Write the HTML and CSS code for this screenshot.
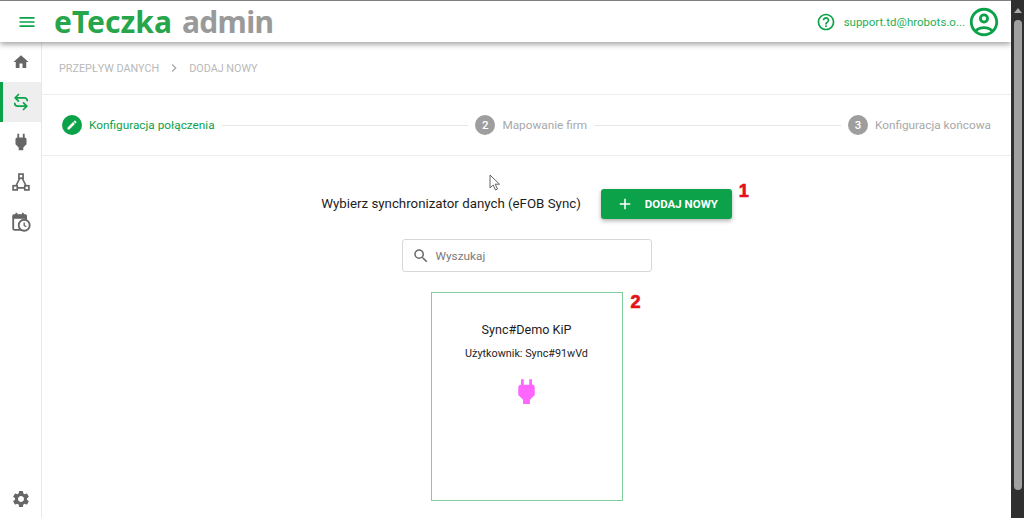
FILE: index.html
```html
<!DOCTYPE html>
<html lang="pl">
<head>
<meta charset="utf-8">
<title>eTeczka admin</title>
<link rel="stylesheet" href="styles.css">
</head>
<body>
<div class="app">
  <header class="topbar">
    <button class="menu-btn" aria-label="menu"><svg class="ic24" viewBox="0 0 24 24"><path d="M3 18h18v-2H3v2zm0-5h18v-2H3v2zm0-7v2h18V6H3z"/></svg></button>
    <div class="logo"><span class="logo-a">eTeczka</span><span class="logo-b">admin</span></div>
    <div class="top-right">
      <svg class="ic-help" viewBox="0 0 24 24"><path d="M11 18h2v-2h-2v2zm1-16C6.48 2 2 6.48 2 12s4.48 10 10 10 10-4.48 10-10S17.52 2 12 2zm0 18c-4.41 0-8-3.59-8-8s3.59-8 8-8 8 3.59 8 8-3.59 8-8 8zm0-14c-2.21 0-4 1.79-4 4h2c0-1.1.9-2 2-2s2 .9 2 2c0 2-3 1.75-3 5h2c0-2.25 3-2.5 3-5 0-2.21-1.79-4-4-4z"/></svg>
      <span class="email">support.td@hrobots.o...</span>
      <svg class="ic-user" viewBox="0 0 24 24"><path d="M12 2C6.48 2 2 6.48 2 12s4.48 10 10 10 10-4.48 10-10S17.52 2 12 2zM7.35 18.5C8.66 17.56 10.26 17 12 17s3.34.56 4.65 1.5C15.34 19.44 13.74 20 12 20s-3.34-.56-4.65-1.5zm10.79-1.38C16.45 15.8 14.32 15 12 15s-4.45.8-6.14 2.12C4.7 15.73 4 13.95 4 12c0-4.42 3.58-8 8-8s8 3.58 8 8c0 1.95-.7 3.73-1.86 5.12zM12 6c-1.93 0-3.5 1.57-3.5 3.5S10.07 13 12 13s3.5-1.57 3.5-3.5S13.93 6 12 6zm0 5c-.83 0-1.5-.67-1.5-1.5S11.17 8 12 8s1.5.67 1.5 1.5S12.83 11 12 11z"/></svg>
    </div>
  </header>
  <div class="body">
    <nav class="side">
      <div class="nav-item"><svg class="ic18" viewBox="0 0 24 24"><path d="M10 20v-6h4v6h5v-8h3L12 3 2 12h3v8z"/></svg></div>
      <div class="nav-item active"><svg class="ic20 swap" viewBox="0 0 24 24"><path d="M9 3L5 7l4 4M5 7h11a3.500 3.500 0 0 1 3.500 3.500M15 13l4 4-4 4M19 17H8a3.500 3.500 0 0 1-3.500-3.500"/></svg></div>
      <div class="nav-item"><svg class="ic22" viewBox="0 0 24 24"><path d="M16 7V3h-2v4h-4V3H8v4h-.01C6.900 7 6 7.900 6 8.990v5.490L9.500 18v3h5v-3l3.500-3.510v-5.500c0-1.100-.9-2-2-2z"/></svg></div>
      <div class="nav-item"><svg class="ic20 hub" viewBox="0 0 24 24"><rect x="9.500" y="2.500" width="5" height="5"/><rect x="2.500" y="16.500" width="5" height="5"/><rect x="16.500" y="16.500" width="5" height="5"/><path d="M10.500 7.500L6 16.500M13.500 7.500L18 16.500M7.500 19h9"/></svg></div>
      <div class="nav-item"><svg class="ic22 cal" viewBox="0 0 24 24"><rect class="cal-body" x="3.500" y="4.500" width="14" height="16" rx="1.500"/><rect class="cal-fill" x="3" y="4" width="15" height="4.500"/><rect class="cal-fill" x="6" y="2" width="2" height="3"/><rect class="cal-fill" x="13" y="2" width="2" height="3"/><circle cx="15.500" cy="15.500" r="6"/><path class="cal-hand" d="M15.500 12.500v3.300l2.300 1.400"/></svg></div>
      <div class="nav-item settings"><svg class="ic20" viewBox="0 0 24 24"><path d="M19.140 12.940c.04-.3.060-.61.060-.94 0-.32-.02-.64-.07-.94l2.030-1.580a.49.49 0 0 0 .12-.61l-1.920-3.320a.488.488 0 0 0-.59-.22l-2.390.96c-.5-.38-1.030-.7-1.620-.94l-.36-2.540a.484.484 0 0 0-.48-.41h-3.840c-.24 0-.43.170-.47.410l-.36 2.540c-.59.240-1.130.570-1.620.94l-2.390-.96c-.22-.08-.47 0-.59.220L2.740 8.870c-.12.210-.08.470.12.610l2.030 1.580c-.05.300-.09.630-.09.940s.02.640.07.940l-2.030 1.580a.49.49 0 0 0-.12.610l1.920 3.320c.12.220.37.290.59.220l2.390-.96c.5.380 1.030.7 1.620.94l.36 2.540c.05.240.24.410.48.410h3.840c.24 0 .44-.17.47-.41l.36-2.540c.59-.24 1.130-.56 1.620-.94l2.390.96c.22.080.47 0 .59-.22l1.920-3.320c.12-.22.070-.47-.12-.61l-2.010-1.580zM12 15.600c-1.980 0-3.600-1.620-3.600-3.600s1.620-3.600 3.600-3.600 3.600 1.620 3.600 3.600-1.620 3.600-3.600 3.600z"/></svg></div>
    </nav>
    <main class="main">
      <div class="crumbs"><span>PRZEPŁYW DANYCH</span><svg class="chev" viewBox="0 0 24 24"><path d="M8.590 16.590L13.170 12 8.590 7.410 10 6l6 6-6 6z"/></svg><span>DODAJ NOWY</span></div>
      <div class="stepper">
        <div class="step done">
          <span class="dot"><svg viewBox="0 0 24 24"><path d="M3 17.250V21h3.750L17.810 9.940l-3.750-3.750L3 17.250zM20.710 7.040c.39-.39.39-1.020 0-1.410l-2.340-2.340c-.39-.39-1.020-.39-1.410 0l-1.830 1.830 3.750 3.750 1.830-1.830z"/></svg></span>
          <span class="label">Konfiguracja połączenia</span>
        </div>
        <div class="line"></div>
        <div class="step"><span class="dot">2</span><span class="label">Mapowanie firm</span></div>
        <div class="line"></div>
        <div class="step"><span class="dot">3</span><span class="label">Konfiguracja końcowa</span></div>
      </div>
      <section class="content">
        <div class="title-row">
          <h1 class="title">Wybierz synchronizator danych (eFOB Sync)</h1>
          <button class="add-btn"><svg viewBox="0 0 24 24"><path d="M19 13h-6v6h-2v-6H5v-2h6V5h2v6h6v2z"/></svg><span>DODAJ NOWY</span><b class="mark mark-1">1</b></button>
        </div>
        <div class="search">
          <svg viewBox="0 0 24 24"><path d="M15.500 14h-.79l-.28-.27A6.471 6.471 0 0 0 16 9.500 6.500 6.500 0 1 0 9.500 16c1.610 0 3.090-.59 4.230-1.570l.27.28v.79l5 4.990L20.490 19l-4.990-5zm-6 0C7.010 14 5 11.990 5 9.500S7.010 5 9.500 5 14 7.010 14 9.500 11.990 14 9.500 14z"/></svg>
          <span>Wyszukaj</span>
        </div>
        <article class="card">
          <b class="mark mark-2">2</b>
          <div class="card-name">Sync#Demo KiP</div>
          <div class="card-user">Użytkownik: Sync#91wVd</div>
          <svg class="plug" viewBox="0 0 24 24"><path d="M16 7V3h-2v4h-4V3H8v4h-.01C6.900 7 6 7.900 6 8.990v5.490L9.500 18v3h5v-3l3.500-3.510v-5.500c0-1.100-.9-2-2-2z"/></svg>
        </article>
      </section>
      <svg class="cursor" viewBox="0 0 12 18"><path d="M1 1v13l3.200-3 2.300 5 2-1-2.300-4.800H10.500z" fill="#fff" stroke="#666" stroke-width="1"/></svg>
    </main>
  </div>
</div>
<div class="scrollbar"><span class="arrow"></span><span class="thumb"></span></div>
</body>
</html>
```
FILE: styles.css
```css
* { box-sizing: border-box; }
html, body { margin: 0; height: 100%; overflow: hidden; }
body { display: flex; font-family: Roboto, "Liberation Sans", sans-serif; color: #1d1d1d; background: #fff; }
.app { flex: 1; min-width: 0; display: flex; flex-direction: column; border-top: 1px solid #8a8a8a; }
.topbar { height: 41px; flex: none; display: flex; align-items: center; background: #fff; box-shadow: 0 2px 6px rgba(0,0,0,.4); position: relative; z-index: 2; padding-right: 10px; }
.menu-btn { width: 54px; padding: 0; border: 0; background: none; display: flex; justify-content: center; }
.ic24 { width: 20px; height: 20px; fill: #0ca24a; }
.logo { display: flex; gap: 10px; font-family: "Noto Sans", "Open Sans", sans-serif; font-size: 30px; font-weight: 700; line-height: 36px; }
.logo-a { color: #27a54a; }
.logo-b { color: #9a9a9a; letter-spacing: -.6px; }
.top-right { margin-left: auto; display: flex; align-items: center; }
.ic-help { width: 20px; height: 20px; fill: #0ca24a; margin-right: 8px; }
.email { font-size: 11.500px; color: #27b056; white-space: nowrap; margin-right: 2px; }
.ic-user { width: 34px; height: 34px; fill: #0ca24a; }
.body { flex: 1; min-height: 0; display: flex; }
.side { width: 42px; flex: none; border-right: 1px solid #e8e8e8; display: flex; flex-direction: column; }
.nav-item { height: 40px; display: flex; align-items: center; justify-content: center; }
.ic18 { width: 18px; height: 18px; fill: #666; }
.ic20 { width: 20px; height: 20px; fill: #666; }
.ic22 { width: 22px; height: 22px; fill: #666; }
.nav-item.active { background: #eee; border-left: 3px solid #0ca24a; padding-right: 3px; }
.swap { fill: none; stroke: #0ca24a; stroke-width: 2; stroke-linecap: round; stroke-linejoin: round; }
.hub { fill: none; stroke: #666; stroke-width: 2; }
.cal { fill: #fff; stroke: #666; stroke-width: 2; }
.cal .cal-body { fill: none; }
.cal .cal-fill { fill: #666; stroke: none; }
.cal .cal-hand { fill: none; stroke-width: 1.500; }
.settings { margin-top: auto; height: 38px; }
.main { flex: 1; min-width: 0; display: flex; flex-direction: column; position: relative; }
.crumbs { height: 53px; flex: none; display: flex; align-items: center; padding-left: 17px; font-size: 10.800px; color: #b9b9b9; border-bottom: 1px solid #eee; }
.chev { width: 16px; height: 16px; fill: #aaa; margin: 0 7px; }
.stepper { height: 61px; flex: none; display: flex; align-items: center; padding: 0 20px; border-bottom: 1px solid #eee; }
.step { display: flex; align-items: center; gap: 7px; font-size: 11.800px; color: #a8a8a8; white-space: nowrap; }
.dot { width: 20px; height: 20px; border-radius: 50%; background: #9e9e9e; color: #fff; font-size: 11.500px; font-weight: 500; display: flex; align-items: center; justify-content: center; }
.dot svg { width: 12px; height: 12px; fill: #fff; }
.done { color: #0ca24a; }
.done .dot { background: #0ca24a; }
.line { flex: 1; height: 1px; background: #e6e6e6; margin: 0 7px; }
.content { flex: 1; min-height: 0; display: flex; flex-direction: column; align-items: center; padding-top: 33px; }
.title-row { display: flex; align-items: center; gap: 20px; }
.title { margin: 0 0 2px; font-size: 13.300px; font-weight: 400; color: #1d1d1d; }
.add-btn { position: relative; width: 131px; height: 30px; padding: 0 0 0 15px; display: flex; align-items: center; gap: 11px; background: #0ca24a; color: #fff; border: 0; border-radius: 3px; box-shadow: 0 2px 4px rgba(0,0,0,.3); font-family: inherit; font-size: 11.500px; font-weight: 700; white-space: nowrap; }
.add-btn svg { width: 18px; height: 18px; fill: #fff; }
.mark { position: absolute; color: #e4111c; font-family: "Liberation Sans", sans-serif; font-size: 18px; font-weight: 700; line-height: 20px; -webkit-text-stroke: .7px #e4111c; }
.mark-1 { left: 138px; top: -8px; }
.mark-2 { left: 199px; top: -1px; }
.search { width: 250px; height: 33px; margin-top: 20px; border: 1px solid #d8d8d8; border-radius: 3px; display: flex; align-items: center; padding-left: 9px; gap: 6px; font-size: 11.800px; color: #7a7a7a; }
.search svg { width: 18px; height: 18px; fill: #6a6a6a; }
.card { position: relative; width: 192px; height: 209px; margin-top: 20px; border: 1px solid #7dcf9b; display: flex; flex-direction: column; align-items: center; padding-top: 28px; }
.card-name { font-size: 12.600px; line-height: 18px; color: #1d1d1d; }
.card-user { font-size: 10.800px; line-height: 14px; margin-top: 8px; color: #1d1d1d; }
.plug { width: 33px; height: 33px; fill: #ff66ff; margin-top: 14px; }
.cursor { position: absolute; left: 447px; top: 132px; width: 12px; height: 18px; }
.scrollbar { width: 13px; flex: none; background: #2f2f2f; display: flex; flex-direction: column; align-items: center; padding-top: 8px; position: relative; z-index: 3; }
.arrow { width: 0; height: 0; border-left: 4px solid transparent; border-right: 4px solid transparent; border-bottom: 5px solid #a8a8a8; }
.thumb { width: 8px; height: 470px; margin-top: 7px; border-radius: 4px; background: #a0a0a0; }
```
